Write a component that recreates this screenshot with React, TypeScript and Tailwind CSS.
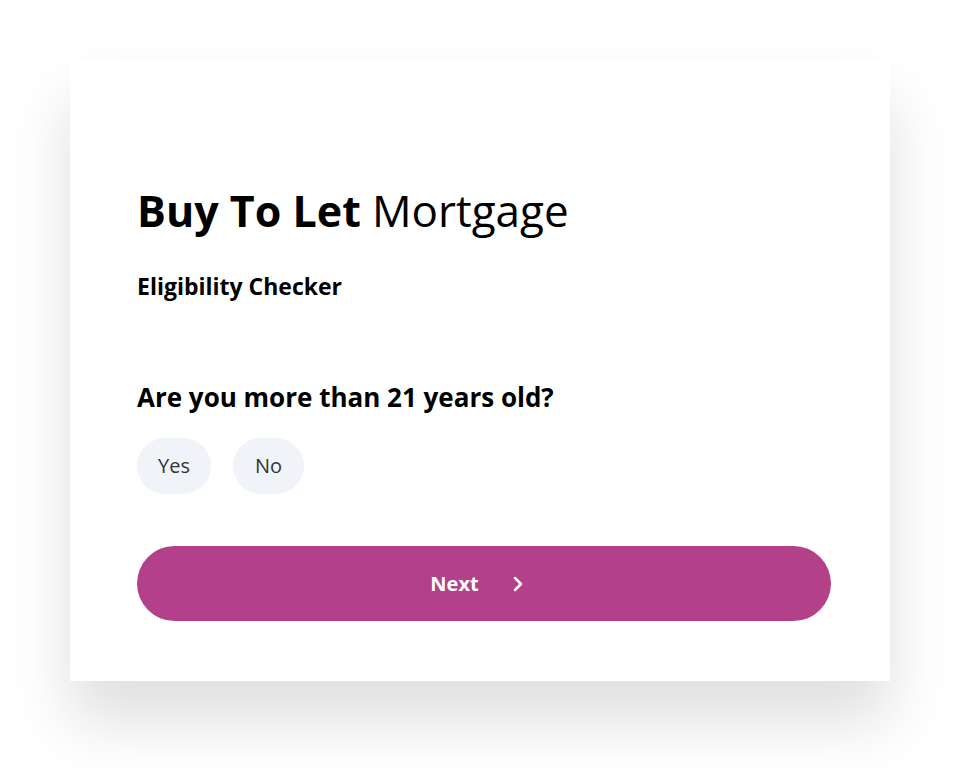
import { ChevronRight } from 'lucide-react';

export default function App() {
  return (
    <div className="min-h-[768px] w-full bg-white pt-[60px] font-['Open_Sans',sans-serif]">
      <div className="mx-[70px] h-[621px] bg-white px-[67px] pt-[120px] shadow-[0_40px_60px_rgba(0,0,0,0.13)]">
        <h1 className="text-[43px] leading-[60px] text-black">
          <span className="font-bold">Buy To Let</span> <span className="text-[44px] font-normal">Mortgage</span>
        </h1>
        <p className="mt-[30px] text-[23px] font-bold leading-[30px] text-black">Eligibility Checker</p>

        <p className="mt-[80px] text-[26px] font-bold leading-[32px] text-black">Are you more than 21 years old?</p>
        <div className="mt-[25px] flex gap-[22px]">
          <button className="h-[56px] w-[74px] rounded-full bg-[#f0f3f8] text-[20px] text-[#333]">Yes</button>
          <button className="h-[56px] w-[71px] rounded-full bg-[#f0f3f8] text-[20px] text-[#333]">No</button>
        </div>

        <button className="mt-[52px] flex h-[75px] w-[694px] items-center justify-center gap-[27px] rounded-full bg-[#b2418a] pr-[8px] text-[20px] font-bold text-white">
          <span>Next</span>
          <ChevronRight className="size-6" strokeWidth={2.5} />
        </button>
      </div>
    </div>
  );
}
